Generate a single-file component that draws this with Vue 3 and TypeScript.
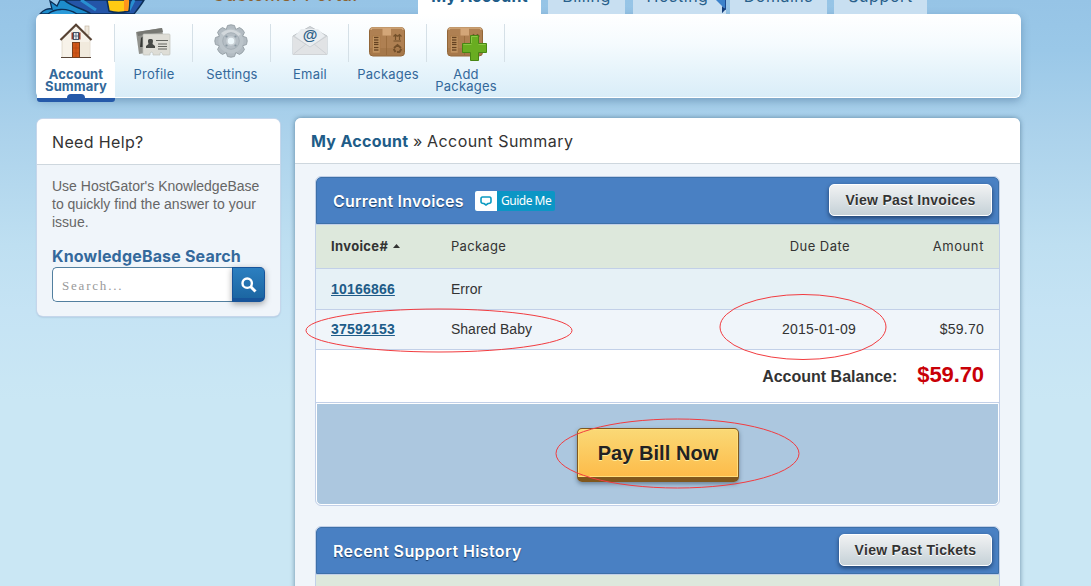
<script setup lang="ts">
interface NavItem { id: string; lines: string[]; active?: boolean }
interface Invoice { id: string; pkg: string; due: string; amount: string }

const tabs: { label: string; cls: string }[] = [
  { label: 'My Account', cls: 'tab-account active' },
  { label: 'Billing', cls: 'tab-billing' },
  { label: 'Hosting', cls: 'tab-hosting' },
  { label: 'Domains', cls: 'tab-domains' },
  { label: 'Support', cls: 'tab-support' },
]
const nav: NavItem[] = [
  { id: 'home', lines: ['Account', 'Summary'], active: true },
  { id: 'profile', lines: ['Profile'] },
  { id: 'settings', lines: ['Settings'] },
  { id: 'email', lines: ['Email'] },
  { id: 'packages', lines: ['Packages'] },
  { id: 'add', lines: ['Add', 'Packages'] },
]
const invoices: Invoice[] = [
  { id: '10166866', pkg: 'Error', due: '', amount: '' },
  { id: '37592153', pkg: 'Shared Baby', due: '2015-01-09', amount: '$59.70' },
]
const teeth = [0, 45, 90, 135, 180, 225, 270, 315]
const bars = [0, 2.5, 5, 7, 10, 12.5]
</script>

<template>
  <div class="page">
    <header class="top">
      <svg class="mascot" width="110" height="14" viewBox="0 0 110 14">
        <path d="M2 14C5 10 10 8 14 9L12 1L19 6L22 0H54L62 14Z" fill="#1d8ccc" stroke="#0b2e57" stroke-width="1.3" />
        <path d="M10 14C16 9 28 7 39 14" fill="#2b9ad9" stroke="#0b2e57" stroke-width="1.3" />
        <path d="M26 0C34 7 46 9 53 14H96C99 10 103 5 106 0Z" fill="#2455a8" stroke="#0b2e57" stroke-width="1.5" />
        <path d="M43 0L58 10M96 0L91 10" stroke="#298fd0" stroke-width="3" />
        <path d="M69 0L71 11Q80 14 91 11L92 0Z" fill="#ffca13" stroke="#0b2e57" stroke-width="1.5" />
        <path d="M86 0H91L90 11L86 11Z" fill="#ff941d" />
      </svg>
      <div class="brand">Customer Portal</div>
      <nav class="tabs">
        <div v-for="t in tabs" :key="t.label" class="tab" :class="t.cls"><span>{{ t.label }}</span>
          <svg v-if="t.label === 'Hosting'" class="ribbon" width="12" height="14" viewBox="0 0 12 14">
            <path d="M0 0L10 10V0Z" fill="#3c82cb" /><path d="M6 6L10 10V0H9V9L6 13Z" fill="#1d4b91" /><path d="M6 7V13L10 9Z" fill="#143d79" />
          </svg>
        </div>
      </nav>
    </header>

    <nav class="subnav">
      <a v-for="n in nav" :key="n.id" class="item" :class="{ current: n.active }">
        <svg class="icon" width="48" height="42" viewBox="0 0 48 42">
          <g v-if="n.id === 'home'">
            <rect x="33" y="6" width="4" height="9" fill="#eee7db" stroke="#c6b9a6" stroke-width=".7" />
            <path d="M10 18L24 5L38 18V37.5H10Z" fill="#f7f2e9" stroke="#d5cabb" stroke-width=".6" />
            <path d="M24 22L38 22V37H24Z" fill="#eee5d7" opacity=".65" />
            <path d="M8.5 20L24 4.8L39.5 20" fill="none" stroke="#574334" stroke-width="2.2" />
            <path d="M9 37.5H39" stroke="#5a4638" />
            <rect x="19.5" y="12.5" width="9" height="7" fill="#963c2c" /><rect x="21.5" y="12.5" width="5" height="7" fill="#e5e9ed" stroke="#44546b" />
            <path d="M24 13V19M21 16H27" stroke="#44546b" stroke-width=".7" />
            <rect x="20.5" y="22.5" width="7" height="15" fill="#cf5719" stroke="#79401e" />
            <path d="M24 23V37M21 28H27M21 33H27" stroke="#b54410" stroke-width=".6" />
          </g>
          <g v-else-if="n.id === 'profile'">
            <path d="M6 12L32 8L35 30L9 34Z" fill="#92938e" />
            <path d="M7 12L32 8L33 12L8 16Z" fill="#777873" />
            <path d="M11 18Q13 15 15 18V25L17 27H10Z" fill="#373936" />
            <path d="M13 15Q13 14 14 14H39Q40 14 40 15V34Q40 35 39 35H33L32 33Q31 31 30 33V35H23V33Q22 31 20 33L20 35H14Q13 35 13 34Z" fill="#deddd6" stroke="#c2c3bd" stroke-width=".7" />
            <path d="M16 28V26L18.5 24C17.5 20 18 19 20.5 19C23 19 23.5 20 22.5 24L25 26V28Z" fill="#474946" />
            <path d="M26 20.5H38M28 24H37M28 26.5H37M28 29H37" stroke="#62645f" stroke-width="1.2" />
          </g>
          <g v-else-if="n.id === 'settings'">
            <g fill="#b2bbc2" stroke="#8e989e" stroke-width=".8">
              <path v-for="a in teeth" :key="a" :transform="`rotate(${a} 23 21)`" d="M18 10L19.5 5.5Q23 4 26.5 5.5L28 10Z" />
            </g>
            <circle cx="23" cy="21" r="12.5" fill="#bbc4ca" />
            <path d="M13 13Q23 6 33 14L28 18Q22 13 17 17Z" fill="#d9dfe2" opacity=".75" />
            <circle cx="23" cy="21" r="8.3" fill="#b5bec5" stroke="#a0aab1" stroke-width=".8" />
            <g fill="#8897a1"><circle cx="18.5" cy="16.5" r="1.1" /><circle cx="27.5" cy="16.5" r="1.1" /><circle cx="18.5" cy="25.5" r="1.1" /><circle cx="27.5" cy="25.5" r="1.1" /></g>
            <circle cx="23" cy="21" r="4" fill="#edf7fb" stroke="#c9d1d6" stroke-width="1.5" />
          </g>
          <g v-else-if="n.id === 'email'">
            <path d="M7 16L24 6.5L41 16V34.5H7Z" fill="#d3d8dc" stroke="#bec3c7" />
            <path d="M9 16L15 9H32L39 16L24 27Z" fill="#e9edf0" />
            <path d="M7 16L24 27L41 16V34.5H7Z" fill="#e1e3e5" />
            <path d="M7.5 34L20 24M40.5 34L28 24M7 16L24 27L41 16" fill="none" stroke="#c9cdd0" stroke-width=".8" />
            <text x="24" y="20" text-anchor="middle" class="at">@</text>
          </g>
          <g v-else>
            <rect x="5.5" y="7.5" width="35" height="28.5" rx="3.5" fill="#af8052" stroke="#926638" />
            <path d="M7 10Q7 8 9 8H37Q39 8 39 10" fill="none" stroke="#d2a97c" stroke-width="1.5" />
            <path d="M6 28V33Q6 35.5 9 35.5H37Q40 35.5 40 33V28Z" fill="#986b3e" opacity=".4" />
            <rect x="18.5" y="8" width="8.5" height="7.5" fill="#d3a678" />
            <path d="M22.5 16V35" stroke="#936638" stroke-width=".7" />
            <rect x="8.5" y="16" width="7.5" height="17" fill="#c29461" stroke="#aa7a48" stroke-width=".7" />
            <path v-for="b in bars" :key="b" :d="`M10 ${17.5 + b}H14.5`" stroke="#654221" stroke-width="1.3" />
            <g fill="none" stroke="#74502a" stroke-width="1.2">
              <path d="M29.5 21H37M31.5 20V15M35.5 20V15M29.5 16.5L31.5 14.5L33.5 16.5M33.5 16.5L35.5 14.5L37.5 16.5" />
              <path d="M30 28L33.5 25L37 28M37.3 29L35.5 32H33M31.5 32L29.7 29" stroke-width="2" />
            </g>
            <path v-if="n.id === 'add'" d="M28.5 15.5H36.5V23.5H44.5V32.5H36.5V40.5H28.5V32.5H20.5V23.5H28.5Z" fill="#69ad21" stroke="#478614" />
            <path v-if="n.id === 'add'" d="M29.5 23V16.5H35.5M21.5 24.5H29.5M36.5 24.5H43.5" fill="none" stroke="#8ac744" />
          </g>
        </svg>
        <span v-for="l in n.lines" :key="l" class="label" :class="l.toLowerCase()">{{ l }}</span>
      </a>
    </nav>

    <div class="columns">
      <aside class="help">
        <h3><span>Need Help?</span></h3>
        <div class="help-body">
          <p>Use HostGator's KnowledgeBase<br>to quickly find the answer to your<br>issue.</p>
          <h4><span>KnowledgeBase Search</span></h4>
          <div class="search">
            <input type="text" placeholder="Search...">
            <button aria-label="Search">
              <svg width="16" height="16" viewBox="0 0 16 16"><circle cx="6.2" cy="6.2" r="4.7" fill="none" stroke="#fff" stroke-width="2.4" /><path d="M9.5 9.5L14.5 14.5" stroke="#fff" stroke-width="3" /></svg>
            </button>
          </div>
        </div>
      </aside>

      <main class="content">
        <div class="crumb"><a>My Account</a><i>»</i><span>Account Summary</span></div>
        <section class="panel">
          <div class="panel-head">
            <h2 class="h-inv">Current Invoices</h2>
            <div class="guide"><span class="guide-icon"><svg width="12" height="10" viewBox="0 0 12 10"><path d="M2.5 1H9.5Q11 1 11 3V5.5Q11 7.5 8.5 7.5H8L6 9L4 7.5H3.5Q1 7.5 1 5.5V3Q1 1 2.5 1Z" fill="none" stroke="#0c9bc2" stroke-width="1.6" /></svg></span><span class="guide-text">Guide Me</span></div>
            <button class="silver inv">View Past Invoices</button>
          </div>
          <div class="row thead">
            <b><span>Invoice#</span><svg width="7" height="4" viewBox="0 0 7 4"><path d="M0 4L3.5 0L7 4Z" fill="#333" /></svg></b><span class="c-pkg">Package</span><span class="c-due">Due Date</span><span class="c-amt">Amount</span>
          </div>
          <div v-for="(r, i) in invoices" :key="r.id" class="row" :class="i ? 'even' : 'odd'">
            <span><a>{{ r.id }}</a></span><span>{{ r.pkg }}</span><span class="num">{{ r.due }}</span><span class="num">{{ r.amount }}</span>
          </div>
          <div class="balance"><span class="bal-label">Account Balance:</span><span class="bal-value">$59.70</span></div>
          <div class="pay"><button>Pay Bill Now</button></div>
        </section>
        <section class="panel">
          <div class="panel-head">
            <h2 class="h-sup">Recent Support History</h2>
            <button class="silver tix">View Past Tickets</button>
          </div>
          <div class="row thead"></div>
        </section>
      </main>
    </div>

    <svg class="marks" width="1091" height="586" viewBox="0 0 1091 586">
      <g fill="none" stroke="#f23c40">
        <ellipse cx="439" cy="330.5" rx="133" ry="21.5" />
        <ellipse cx="803" cy="327" rx="83" ry="32.5" />
        <ellipse cx="677.5" cy="453.5" rx="121.5" ry="34.5" />
      </g>
    </svg>
  </div>
</template>

<style>
html, body { margin: 0; overflow: hidden; }
</style>

<style scoped>
* { box-sizing: border-box; }
.page { position: relative; width: 1091px; height: 586px; overflow: hidden; font-family: "Liberation Sans", Arial, sans-serif; color: #333; background: linear-gradient(#96c4e6 0, #9ac8e8 50px, #aad1eb 125px, #bedff1 245px, #c5e3f4 310px, #cae7f4 400px, #cae7f4 100%); }
h2, h3, h4, p { margin: 0; }
button { font-family: inherit; }

.top { display: flex; height: 14px; overflow: hidden; padding-left: 38px; }
.mascot { flex: none; width: 110px; }
.brand { width: 206px; margin: -15px 0 0 64px; font: 500 18px/20px Inter, sans-serif; letter-spacing: .4px; color: #8b6332; white-space: nowrap; }
.tabs { display: flex; }
.tab { position: relative; height: 14px; background: #c8dff1; color: #285f8b; font: 16px/20px Inter, sans-serif; text-align: center; white-space: nowrap; }
.tab span { display: block; margin-top: -14px; }
.tab.active { background: #fff; font-weight: 700; color: #205c88; }
.tab-account { width: 123px; margin-right: 7px; letter-spacing: .2px; }
.tab-billing { width: 77px; margin-right: 8px; letter-spacing: .45px; }
.tab-hosting { width: 93px; margin-right: 4px; letter-spacing: .5px; }
.tab-hosting span { padding-right: 4px; }
.tab-domains { width: 97px; margin-right: 7px; letter-spacing: .5px; }
.tab-support { width: 93px; letter-spacing: .6px; }
.ribbon { position: absolute; right: -2px; top: 0; }

.subnav { display: flex; width: 985px; height: 84px; margin-left: 36px; border-radius: 6px; border: 1px solid #fff; border-top: 0; background: linear-gradient(#fff, #f5fbfe 35%, #d9edf8); box-shadow: 0 3px 8px rgba(60, 100, 140, .45); }
.item { position: relative; display: flex; flex-direction: column; align-items: center; width: 78px; height: 84px; padding-top: 6px; color: #33689a; font: 13px/12px Inter, sans-serif; }
.item::after { content: ''; position: absolute; right: 0; top: 10px; width: 1px; height: 38px; background: #d5e0e7; }
.icon { display: block; margin-bottom: 6px; flex: none; }
.item.current { background: #fff; border-radius: 6px 0 0 0; font-weight: 700; }
.item.current::before { content: ''; position: absolute; z-index: 1; left: 0; top: 84px; width: 78px; height: 4px; border-radius: 0 0 3px 3px; background: #2559a9; }
.current .label.summary::after { content: ''; position: absolute; left: 30px; top: 80px; width: 18px; height: 5px; border-radius: 4px 4px 0 0; background: #2559a9; }
.label { white-space: nowrap; letter-spacing: .2px; }
.current .label { letter-spacing: .1px; }
.at { font: 700 15px "Liberation Sans", sans-serif; fill: #2e6187; }

.columns { display: flex; align-items: flex-start; padding: 20px 0 0 37px; }
.help { width: 243px; height: 197px; margin-top: 1px; border-radius: 6px; background: #f0f5fa; overflow: hidden; box-shadow: 0 0 0 1px #c5d6eb, 0 1px 2px #90aec5; }
.help h3 { height: 46px; padding-left: 15px; background: #fff; border-bottom: 1px solid #ced7de; font: 400 16px/47px Inter, sans-serif; letter-spacing: .35px; }
.help-body { padding: 12px 15px 0; }
.help p { font-size: 14px; line-height: 18px; color: #666; white-space: nowrap; }
.help h4 { margin: 16px 0 2px; font: 700 16px/18px Inter, sans-serif; letter-spacing: .18px; color: #34699c; white-space: nowrap; }
.search { display: flex; width: 213px; height: 35px; }
.search input { width: 180px; height: 35px; padding: 3px 9px 0; border: 1px solid #527f9f; border-right: 0; border-radius: 5px 0 0 5px; background: #fff; font: 13px "Liberation Serif", serif; letter-spacing: 1.8px; outline: 0; }
.search input::placeholder { color: #999; opacity: 1; }
.search button { display: flex; align-items: center; justify-content: center; width: 33px; height: 35px; padding: 3px 0 0; border: 1px solid #17549a; border-bottom-width: 4px; border-radius: 0 5px 5px 0; background: linear-gradient(#2c7fc0, #1c66a2); box-shadow: 0 2px 6px rgba(0, 0, 0, .35); }

.content { width: 725px; height: 500px; margin-left: 15px; border-radius: 6px 6px 0 0; background: #f0f5fa; box-shadow: 0 0 5px rgba(50, 90, 120, .65); }
.crumb { display: flex; height: 46px; padding-left: 16px; border-bottom: 1px solid #ced7de; border-radius: 6px 6px 0 0; background: #fff; font: 16px/47px Inter, sans-serif; white-space: nowrap; }
.crumb a { font-weight: 700; color: #205c88; letter-spacing: .3px; width: 97px; }
.crumb i { width: 19px; padding-left: 5px; font-style: normal; }
.crumb span { letter-spacing: .45px; }
.panel { width: 685px; margin: 12px 0 0 20px; border: 1px solid #c2d0e8; border-radius: 6px; overflow: hidden; }
.panel + .panel { margin-top: 20px; }
.panel-head { display: flex; align-items: center; height: 47px; padding: 0 6px 0 16px; border: 1px solid #3d70a8; border-radius: 5px 5px 0 0; background: #4980c3; }
.panel-head h2 { font: 600 16px/20px Inter, sans-serif; color: #fff; text-shadow: 0 1px 1px #173b68; white-space: nowrap; padding-top: 1px; }
.h-inv { width: 142px; letter-spacing: .2px; }
.h-sup { letter-spacing: .38px; }
.guide { display: flex; width: 80px; height: 20px; border-radius: 2px; overflow: hidden; background: #0b96c5; color: #fff; font: 12px/19px "Noto Sans", sans-serif; white-space: nowrap; }
.guide-icon { display: flex; align-items: center; justify-content: center; width: 22px; background: #fff; }
.guide-text { padding-left: 4px; letter-spacing: -.5px; }
.silver { height: 32px; margin: 0 0 1px auto; padding: 0; border: 1px solid #fff; border-radius: 5px; background: linear-gradient(#f1f2f3, #c5d1d7); box-shadow: 0 2px 4px rgba(0, 20, 50, .6); color: #333; font-size: 14px; font-weight: 700; letter-spacing: .28px; text-shadow: 0 1px #fff; }
.inv { width: 163px; }
.tix { width: 153px; }
.row { display: grid; grid-template-columns: 120px 240px 165px 128px; align-items: center; height: 40px; padding: 0 15px; border-bottom: 1px solid #c2d0e8; background: #f0f5fa; font-size: 14px; }
.row > :nth-child(3) { text-align: right; }
.row > :nth-child(4) { text-align: right; }
.row .num { letter-spacing: .25px; }
.row a { color: #205c88; font-weight: 700; text-decoration: underline; letter-spacing: .2px; }
.even { padding-bottom: 2px; }
.odd { height: 41px; background: #e6f1f6; }
.thead { height: 45px; padding-bottom: 1px; background: #dde8dc; border-top: 1px solid #c2d0e8; font: 13px Inter, sans-serif; letter-spacing: .3px; }
.thead b { display: flex; align-items: center; gap: 5px; letter-spacing: .35px; }
.thead .c-due { padding-right: 6px; letter-spacing: .45px; }
.thead .c-amt { letter-spacing: .6px; }
.balance { display: flex; align-items: center; justify-content: flex-end; gap: 20px; height: 53px; padding: 0 15px 2px 0; background: #fff; border-bottom: 1px solid #c2d0e8; font-weight: 700; }
.bal-label { font-size: 16px; padding-top: 4px; }
.bal-value { font-size: 22px; color: #c90007; letter-spacing: -.1px; }
.pay { display: flex; height: 102px; padding: 24px 0 0 260px; border: 1px solid #fff; border-radius: 0 0 5px 5px; background: #acc7df; }
.pay button { width: 162px; height: 54px; padding: 1px 0 0; border: 1px solid #80571d; border-bottom-width: 5px; border-radius: 5px; background: linear-gradient(#fad976, #fdbb49); box-shadow: inset 0 0 0 1px #ffdf7d, 0 2px 4px rgba(40, 60, 80, .5); font-size: 20px; font-weight: 700; letter-spacing: .05px; color: #222; text-shadow: 0 1px #ffed9c; }
.marks { position: absolute; inset: 0; pointer-events: none; }
</style>
